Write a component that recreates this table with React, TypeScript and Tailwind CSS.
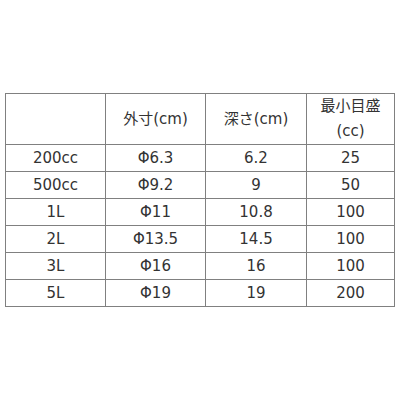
import React from "react";

const rows = [
  ["200cc", "Φ6.3", "6.2", "25"],
  ["500cc", "Φ9.2", "9", "50"],
  ["1L", "Φ11", "10.8", "100"],
  ["2L", "Φ13.5", "14.5", "100"],
  ["3L", "Φ16", "16", "100"],
  ["5L", "Φ19", "19", "200"],
];

export default function App() {
  return (
    <div
      className="w-[400px] h-[400px] bg-white pt-[93px] pl-[5px] text-[#333] text-[15px]"
      style={{ fontFamily: '"DejaVu Sans", "Noto Sans CJK JP", sans-serif' }}
    >
      <div className="inline-grid grid-cols-[99px_99px_100px_87px] grid-rows-[50px_repeat(6,26px)] gap-px p-px bg-[#808080]">
        <div className="bg-white" />
        <div className="bg-white flex items-center justify-center">外寸(cm)</div>
        <div className="bg-white flex items-center justify-center">深さ(cm)</div>
        <div className="bg-white flex flex-col items-center justify-center leading-[25px]">
          <span>最小目盛</span>
          <span>(cc)</span>
        </div>
        {rows.map((r, i) =>
          r.map((c, j) => (
            <div key={`${i}-${j}`} className="bg-white flex items-center justify-center">
              {c}
            </div>
          ))
        )}
      </div>
    </div>
  );
}
